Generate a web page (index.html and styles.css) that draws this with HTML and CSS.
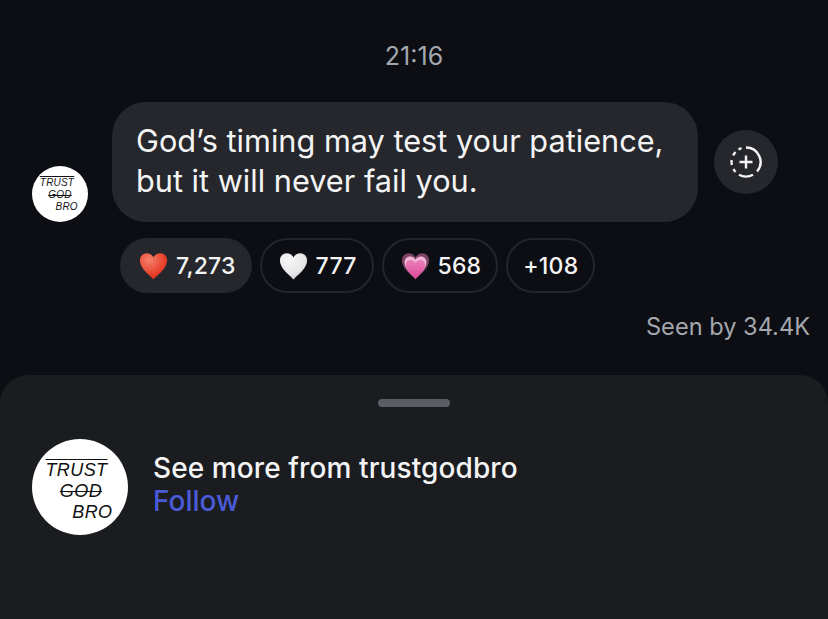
FILE: index.html
```html
<!DOCTYPE html>
<html lang="en">
<head>
    <meta charset="UTF-8">
    <meta name="viewport" content="width=device-width, initial-scale=1.0">
    <title>Broadcast channel</title>
    <link rel="stylesheet" href="styles.css">
</head>
<body>
    <div class="chat">
        <div class="time">21:16</div>
        <div class="message-row">
            <div class="logo logo-small">
                <span class="logo-line first">TRUST</span>
                <span class="logo-line second">GOD</span>
                <span class="logo-line third">BRO</span>
            </div>
            <div class="bubble">God’s timing may test your patience, but it will never fail you.</div>
            <div class="add-btn">
                <svg width="34" height="34" viewBox="0 0 34 34" fill="none" stroke="#f4f4f5" stroke-width="2.4">
                    <path d="M17 2.500A14.500 14.500 0 0 1 28 26.500" />
                    <path d="M24 29.700A14.500 14.500 0 0 1 10 29.700" />
                    <path d="M6.500 27A14.500 14.500 0 0 1 4.500 24" />
                    <path d="M2.900 20A14.500 14.500 0 0 1 2.600 15" />
                    <path d="M4.200 10.500A14.500 14.500 0 0 1 6.500 7" />
                    <path d="M9.500 4.600A14.500 14.500 0 0 1 12.500 3.200" />
                    <path d="M17 10.500V23.500M10.500 17H23.500" />
                </svg>
            </div>
        </div>
        <div class="reactions">
            <div class="pill active">
                <svg class="heart" viewBox="0 0 32 30">
                    <defs>
                        <radialGradient id="red" cx="0.35" cy="0.25" r="0.9">
                            <stop offset="0" stop-color="#f4806e" />
                            <stop offset="0.6" stop-color="#e8432c" />
                            <stop offset="1" stop-color="#c92812" />
                        </radialGradient>
                    </defs>
                    <path fill="url(#red)" d="M16 30C12 25 1 18 1 9C1 4 4.500 1 8.500 1C12 1 14.500 2.800 16 5.500C17.500 2.800 20 1 23.500 1C27.500 1 31 4 31 9C31 18 20 25 16 30Z" />
                </svg>
                <span>7,273</span>
            </div>
            <div class="pill">
                <svg class="heart" viewBox="0 0 32 30">
                    <defs>
                        <radialGradient id="white" cx="0.35" cy="0.25" r="0.9">
                            <stop offset="0" stop-color="#f8f8f8" />
                            <stop offset="0.6" stop-color="#e6e6e6" />
                            <stop offset="1" stop-color="#c4c4c4" />
                        </radialGradient>
                    </defs>
                    <path fill="url(#white)" d="M16 30C12 25 1 18 1 9C1 4 4.500 1 8.500 1C12 1 14.500 2.800 16 5.500C17.500 2.800 20 1 23.500 1C27.500 1 31 4 31 9C31 18 20 25 16 30Z" />
                </svg>
                <span>777</span>
            </div>
            <div class="pill">
                <svg class="heart" viewBox="0 0 32 30">
                    <defs>
                        <linearGradient id="pink" x1="0" y1="0" x2="0" y2="1">
                            <stop offset="0" stop-color="#e97fb8" />
                            <stop offset="1" stop-color="#e0479a" />
                        </linearGradient>
                    </defs>
                    <path fill="#7d4467" d="M16 30C12 25 1 18 1 9C1 4 4.500 1 8.500 1C12 1 14.500 2.800 16 5.500C17.500 2.800 20 1 23.500 1C27.500 1 31 4 31 9C31 18 20 25 16 30Z" />
                    <path fill="#f3b6d6" d="M16 28C12 24 4 18 4 11C4 7 6.500 4.500 10 4.500C13 4.500 15 6 16 8C17 6 19 4.500 22 4.500C25.500 4.500 28 7 28 11C28 18 20 24 16 28Z" />
                    <path fill="url(#pink)" d="M16 29C12 25 5.500 19 5.500 13.500C5.500 10.500 8 8.500 10.500 8.500C13 8.500 15 9.800 16 11.500C17 9.800 19 8.500 21.500 8.500C24 8.500 26.500 10.500 26.500 13.500C26.500 19 20 25 16 29Z" />
                </svg>
                <span>568</span>
            </div>
            <div class="pill more">+108</div>
        </div>
        <div class="seen">Seen by 34.4K</div>
    </div>

    <div class="sheet">
        <div class="handle"></div>
        <div class="follow-row">
            <div class="logo logo-large">
                <span class="logo-line first">TRUST</span>
                <span class="logo-line second">GOD</span>
                <span class="logo-line third">BRO</span>
            </div>
            <div class="follow-text">
                <div class="follow-title">See more from trustgodbro</div>
                <div class="follow-link">Follow</div>
            </div>
        </div>
    </div>
</body>
</html>
```

FILE: styles.css
```css
* {
    margin: 0;
    padding: 0;
    box-sizing: border-box;
}

body {
    width: 828px;
    height: 619px;
    overflow: hidden;
    display: flex;
    flex-direction: column;
    font-family: Inter, 'Liberation Sans', sans-serif;
    background-color: #0c0e13;
    color: #f4f4f5;
}

.chat {
    height: 375px;
    padding-top: 43px;
    display: flex;
    flex-direction: column;
}

.time {
    height: 27px;
    line-height: 27px;
    text-align: center;
    font-size: 25px;
    color: #a4a7ae;
}

.message-row {
    margin-top: 32px;
    padding-left: 32px;
    display: flex;
    align-items: flex-end;
}

.bubble {
    width: 586px;
    height: 120px;
    margin-left: 24px;
    padding: 19px 24px;
    border-radius: 34px;
    background-color: #25272c;
    font-size: 30.7px;
    line-height: 40px;
}

.add-btn {
    width: 64px;
    height: 64px;
    margin-left: 16px;
    margin-bottom: 28px;
    border-radius: 50%;
    background-color: #25272c;
    display: flex;
    justify-content: center;
    align-items: center;
}

.logo {
    flex-shrink: 0;
    border-radius: 50%;
    background-color: #fff;
    color: #111;
    display: flex;
    flex-direction: column;
    justify-content: center;
    font-family: 'Liberation Sans', sans-serif;
    font-style: italic;
}

.logo-line {
    display: block;
}

.logo-small {
    width: 56px;
    height: 56px;
    padding-top: 2px;
    font-size: 10px;
    line-height: 12px;
    letter-spacing: 0.2px;
}

.logo-large {
    width: 96px;
    height: 96px;
    padding-top: 8px;
    font-size: 18px;
    line-height: 21px;
    letter-spacing: 0.4px;
}

.first {
    margin-left: 14%;
    text-decoration: overline;
}

.second {
    margin-left: 29%;
    text-decoration: line-through;
}

.third {
    margin-left: 42%;
}

.reactions {
    margin-top: 16px;
    padding-left: 120px;
    display: flex;
    gap: 8px;
}

.pill {
    height: 55px;
    padding: 0 15px 0 17px;
    border: 2px solid #23252a;
    border-radius: 28px;
    display: flex;
    align-items: center;
    gap: 8px;
    font-size: 23px;
    font-weight: 500;
    letter-spacing: 0.2px;
}

.pill.active {
    padding-right: 14px;
    background-color: #25272c;
    border-color: #25272c;
}

.pill.more {
    padding: 0 15px;
}

.heart {
    width: 29px;
    height: 28px;
}

.seen {
    margin-top: 20px;
    padding-right: 18px;
    text-align: right;
    font-size: 23.6px;
    line-height: 28px;
    color: #a4a7ae;
}

.sheet {
    flex: 1;
    border-radius: 28px 28px 0 0;
    background-color: #1a1c20;
    padding-top: 24px;
}

.handle {
    width: 72px;
    height: 8px;
    margin: 0 auto;
    border-radius: 4px;
    background-color: #5a5d63;
}

.follow-row {
    margin-top: 32px;
    padding-left: 32px;
    display: flex;
    align-items: flex-start;
    gap: 25px;
}

.follow-text {
    padding-top: 13px;
}

.follow-title {
    font-size: 28px;
    line-height: 33px;
    font-weight: 500;
    letter-spacing: 0.1px;
}

.follow-link {
    font-size: 28px;
    line-height: 33px;
    font-weight: 500;
    color: #4a5bd8;
}
```
